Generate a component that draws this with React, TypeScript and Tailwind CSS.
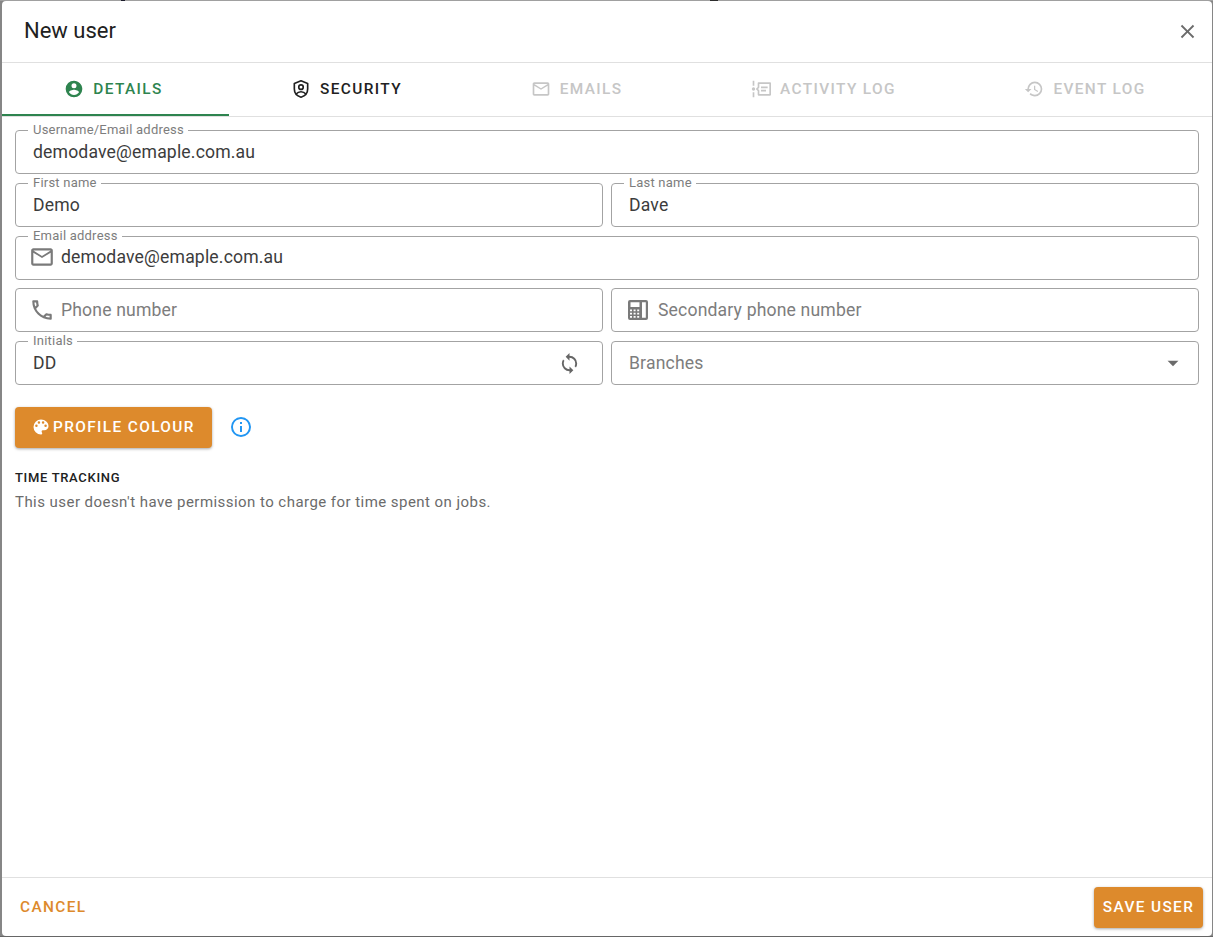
import type { ReactNode } from "react"

const icons = {
    account: "M12,19.2C9.5,19.2 7.29,17.92 6,16C6.03,14 10,12.9 12,12.9C14,12.9 17.97,14 18,16C16.71,17.92 14.5,19.2 12,19.2M12,5A3,3 0 0,1 15,8A3,3 0 0,1 12,11A3,3 0 0,1 9,8A3,3 0 0,1 12,5M12,2A10,10 0 0,0 2,12A10,10 0 0,0 12,22A10,10 0 0,0 22,12C22,6.47 17.5,2 12,2Z",
    email: "M22 6C22 4.9 21.1 4 20 4H4C2.9 4 2 4.9 2 6V18C2 19.1 2.9 20 4 20H20C21.1 20 22 19.1 22 18V6M20 6L12 11L4 6H20M20 18H4V8L12 13L20 8V18Z",
    phone: "M20,15.5C18.8,15.5 17.5,15.3 16.4,14.9C16.3,14.9 16.2,14.9 16.1,14.9C15.8,14.9 15.6,15 15.4,15.2L13.2,17.4C10.4,15.9 8,13.6 6.6,10.8L8.8,8.6C9.1,8.3 9.2,7.9 9,7.6C8.7,6.5 8.5,5.2 8.5,4C8.5,3.5 8,3 7.5,3H4C3.5,3 3,3.5 3,4C3,13.4 10.6,21 20,21C20.5,21 21,20.5 21,20V16.5C21,16 20.5,15.5 20,15.5M5,5H6.5C6.6,5.9 6.8,6.8 7,7.6L5.8,8.8C5.4,7.6 5.1,6.3 5,5M19,19C17.7,18.9 16.4,18.6 15.2,18.2L16.4,17C17.2,17.2 18.1,17.4 19,17.4V19Z",
    history: "M13.5,8H12V13L16.28,15.54L17,14.33L13.5,12.25V8M13,3A9,9 0 0,0 4,12H1L4.96,16.03L9,12H6A7,7 0 0,1 13,5A7,7 0 0,1 20,12A7,7 0 0,1 13,19C11.07,19 9.32,18.21 8.06,16.94L6.64,18.36C8.27,20 10.5,21 13,21A9,9 0 0,0 22,12A9,9 0 0,0 13,3",
    sync: "M12,18A6,6 0 0,1 6,12C6,11 6.25,10.03 6.7,9.2L5.24,7.74C4.46,8.97 4,10.43 4,12A8,8 0 0,0 12,20V23L16,19L12,15M12,4V1L8,5L12,9V6A6,6 0 0,1 18,12C18,13 17.75,13.97 17.3,14.8L18.76,16.26C19.54,15.03 20,13.57 20,12A8,8 0 0,0 12,4Z",
    palette: "M17.5,12A1.5,1.5 0 0,1 16,10.5A1.5,1.5 0 0,1 17.5,9A1.5,1.5 0 0,1 19,10.5A1.5,1.5 0 0,1 17.5,12M14.5,8A1.5,1.5 0 0,1 13,6.5A1.5,1.5 0 0,1 14.5,5A1.5,1.5 0 0,1 16,6.5A1.5,1.5 0 0,1 14.5,8M9.5,8A1.5,1.5 0 0,1 8,6.5A1.5,1.5 0 0,1 9.5,5A1.5,1.5 0 0,1 11,6.5A1.5,1.5 0 0,1 9.5,8M6.5,12A1.5,1.5 0 0,1 5,10.5A1.5,1.5 0 0,1 6.5,9A1.5,1.5 0 0,1 8,10.5A1.5,1.5 0 0,1 6.5,12M12,3A9,9 0 0,0 3,12A9,9 0 0,0 12,21A1.5,1.5 0 0,0 13.5,19.5C13.5,19.11 13.35,18.76 13.11,18.5C12.88,18.23 12.73,17.88 12.73,17.5A1.5,1.5 0 0,1 14.23,16H16A5,5 0 0,0 21,11C21,6.58 16.97,3 12,3Z",
    info: "M11,9H13V7H11M12,20C7.59,20 4,16.41 4,12C4,7.59 7.59,4 12,4C16.41,4 20,7.59 20,12C20,16.41 16.41,20 12,20M12,2A10,10 0 0,0 2,12A10,10 0 0,0 12,22A10,10 0 0,0 22,12A10,10 0 0,0 12,2M11,17H13V11H11V17Z",
    close: "M19,6.41L17.59,5L12,10.59L6.41,5L5,6.41L10.59,12L5,17.59L6.41,19L12,13.41L17.59,19L19,17.59L13.41,12L19,6.41Z",
    menuDown: "M7,10L12,15L17,10H7Z",
    deskphone: "M4,2H20A2,2 0 0,1 22,4V20A2,2 0 0,1 20,22H4A2,2 0 0,1 2,20V4A2,2 0 0,1 4,2M4.5,4.3V9H13.5V4.3H4.5M16,4.3V19.8H19.8V4.3H16M4,11.5V13.3H6V11.5H4M7.6,11.5V13.3H9.6V11.5H7.6M11.2,11.5V13.3H13.2V11.5H11.2M4,14.8V16.6H6V14.8H4M7.6,14.8V16.6H9.6V14.8H7.6M11.2,14.8V16.6H13.2V14.8H11.2M4,18.1V19.8H6V18.1H4M7.6,18.1V19.8H9.6V18.1H7.6M11.2,18.1V19.8H13.2V18.1H11.2Z",
}

const Icon = ({ name, className }: { name: keyof typeof icons, className: string }) => {
    return <svg viewBox="0 0 24 24" fill="currentColor" fillRule="evenodd" className={`shrink-0 ${className}`}>
        <path d={icons[name]} />
    </svg>
}

const ShieldIcon = () => {
    return <svg viewBox="0 0 24 24" fill="none" stroke="currentColor" strokeWidth="2" className="size-5 shrink-0">
        <path d="M12 2.2L20 5.4V12C20 17 16.4 20.5 12 21.9C7.6 20.5 4 17 4 12V5.4Z" strokeLinejoin="round" />
        <circle cx="12" cy="9.8" r="2.7" />
        <path d="M6.2 18C8 15.8 10 15.3 12 15.3C14 15.3 16 15.8 17.8 18" />
    </svg>
}

const TimelineIcon = () => {
    return <svg viewBox="0 0 24 24" fill="none" stroke="currentColor" strokeWidth="2" className="size-5 shrink-0">
        <path d="M3 2V8M3 16V22" />
        <circle cx="3" cy="12" r="2" fill="currentColor" stroke="none" />
        <path d="M9 5H23V19H9V14L7 12L9 10Z" strokeLinejoin="round" />
        <path d="M12 10H20M12 14H18" />
    </svg>
}

const Tab = ({ icon, label, className }: { icon: ReactNode, label: string, className: string }) => {
    return <div className={`flex items-center justify-center gap-[9px] border-b-2 text-[15.4px] leading-5 font-medium tracking-[1.37px] ${className}`}>
        {icon}
        <span>{label}</span>
    </div>
}

type FieldProps = {
    label?: string
    value?: string
    placeholder?: string
    icon?: ReactNode
    append?: ReactNode
    className?: string
}

const Field = ({ label, value, placeholder, icon, append, className = "" }: FieldProps) => {
    return <div className={`relative flex h-11 items-center rounded border border-[#a3a3a3] pl-[17px] pr-[18px] text-[17.6px] leading-6 tracking-[0.16px] ${className}`}>
        {label && <span className="absolute -top-[9px] left-3 bg-white pr-1 pl-[5px] text-[13px] leading-4 tracking-[0.22px] text-[#7d7d7d]">{label}</span>}
        {icon}
        <span className={value ? "grow text-[#3c3c3c]" : "grow text-[#7d7d7d]"}>{value || placeholder}</span>
        {append}
    </div>
}

export default function App() {
    return <div className="h-[937px] w-[1213px] bg-[#868686] pr-px pl-0.5 font-[Roboto,sans-serif]">
        {/* sliver of the page behind the dialog */}
        <div className="-mr-px -ml-0.5 flex h-px bg-[#a0a0a0] pl-[121px]">
            <div className="w-1 bg-[#1c1c2c]" />
            <div className="ml-[585px] w-2 bg-[#2c2c2c]" />
        </div>
        <div className="flex h-[935px] flex-col overflow-hidden rounded bg-white">
            <div className="flex h-[62px] items-center justify-between border-b border-[#e0e0e0] pr-[13px] pb-0.5 pl-[22px]">
                <h1 className="text-[22px] leading-8 text-[#212121]">New user</h1>
                <Icon name="close" className="mt-px size-[23px] text-[#6b6b6b]" />
            </div>
            <div className="grid h-[54px] grid-cols-[227px_235px_225px_268px_255px] border-b border-[#e0e0e0]">
                <Tab label="DETAILS" icon={<Icon name="account" className="size-5" />} className="border-[#2e844f] pr-1 text-[#2e844f]" />
                <Tab label="SECURITY" icon={<ShieldIcon />} className="border-transparent text-[#212121]" />
                <Tab label="EMAILS" icon={<Icon name="email" className="size-5" />} className="border-transparent text-[#c6c6c6]" />
                <Tab label="ACTIVITY LOG" icon={<TimelineIcon />} className="border-transparent pl-px text-[#c6c6c6]" />
                <Tab label="EVENT LOG" icon={<Icon name="history" className="size-5" />} className="border-transparent pl-px text-[#c6c6c6]" />
            </div>
            <div className="grow px-[13px] pt-[13px]">
                <div className="grid grid-cols-2 gap-x-2 gap-y-[8.75px]">
                    <Field label="Username/Email address" value="demodave@emaple.com.au" className="col-span-2" />
                    <Field label="First name" value="Demo" />
                    <Field label="Last name" value="Dave" />
                    <Field label="Email address" value="demodave@emaple.com.au" className="col-span-2 pb-0.5" icon={<Icon name="email" className="-ml-[4.5px] mr-[6.5px] size-[26px] text-[#7a7a7a]" />} />
                    <Field placeholder="Phone number" icon={<Icon name="phone" className="-ml-[4.5px] mr-[6.5px] size-[26px] text-[#7a7a7a]" />} />
                    <Field placeholder="Secondary phone number" icon={<Icon name="deskphone" className="-ml-[3.5px] mr-[8.5px] size-6 text-[#7a7a7a]" />} />
                    <Field label="Initials" value="DD" append={<Icon name="sync" className="mr-[3px] size-[23px] text-[#666666]" />} />
                    <Field placeholder="Branches" append={<Icon name="menuDown" className="-mr-[5.5px] size-[26px] text-[#6b6b6b]" />} />
                </div>
                <div className="mt-[22px] flex items-start">
                    <button className="flex h-[41px] w-[197px] items-center rounded bg-[#dd8a2c] pl-[15.5px] text-[15.4px] font-medium tracking-[1.37px] text-white shadow-[0_1px_3px_rgba(0,0,0,0.35)]">
                        <Icon name="palette" className="mr-[2.5px] mb-0.5 size-5" />
                        PROFILE COLOUR
                    </button>
                    <Icon name="info" className="mt-[7.5px] ml-[17px] size-6 text-[#2196f3]" />
                </div>
                <h2 className="mt-5 text-[13px] leading-5 font-medium tracking-[0.68px] text-[#212121]">TIME TRACKING</h2>
                <p className="mt-0.5 text-[15px] leading-6 tracking-[0.45px] text-[#6b6b6b]">This user doesn't have permission to charge for time spent on jobs.</p>
            </div>
            <div className="flex h-[59px] items-center justify-between border-t border-[#e0e0e0] pr-[9px] pl-[18px] text-[15.4px] font-medium tracking-[1.37px]">
                <button className="pt-px text-[#dd8a2c]">CANCEL</button>
                <button className="h-[41px] w-[109px] rounded bg-[#dd8a2c] pt-px text-white shadow-[0_1px_3px_rgba(0,0,0,0.35)]">SAVE USER</button>
            </div>
        </div>
        <div className="-mr-px -ml-0.5 h-px bg-[#666666]" />
    </div>
}
